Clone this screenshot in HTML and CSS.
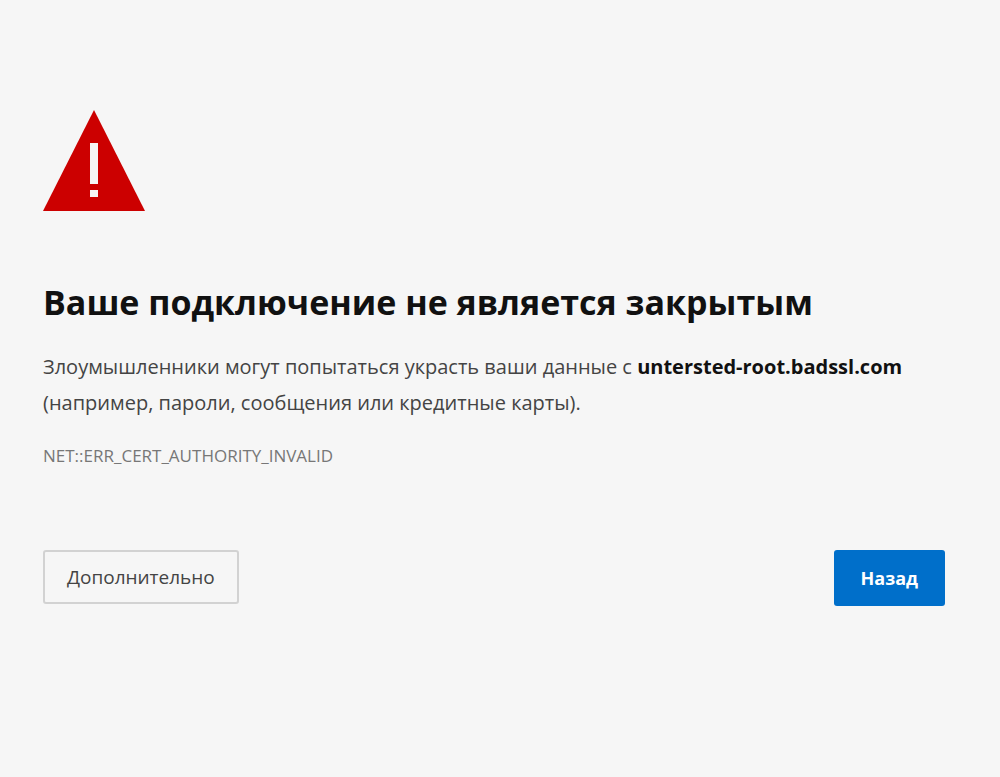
FILE: index.html
```html
<!DOCTYPE html>
<html lang="ru">

<head>
    <meta charset="UTF-8">
    <meta name="viewport" content="width=device-width, initial-scale=1.0">
    <title>Ошибка конфиденциальности</title>
    <link rel="stylesheet" href="styles.css">
</head>

<body>
    <main class="main">
        <svg class="icon" viewBox="0 0 102 102" aria-hidden="true">
            <path class="icon_triangle" d="M51 0L102 101H0Z" />
            <path class="icon_mark" d="M47 33h8v41h-8zM47 80h8v7h-8z" />
        </svg>
        <h1>Ваше подключение не является закрытым</h1>
        <p class="explanation">
            Злоумышленники могут попытаться украсть ваши данные с <strong>untersted-root.badssl.com</strong>
            (например, пароли, сообщения или кредитные карты).
        </p>
        <div class="error_code">NET::ERR_CERT_AUTHORITY_INVALID</div>
        <div class="buttons">
            <button type="button" class="details">Дополнительно</button>
            <button type="button" class="back">Назад</button>
        </div>
    </main>
</body>

</html>
```
FILE: styles.css
```css
body {
    margin: 0;
    background: #f6f6f6;
    color: #444;
    font-family: "Open Sans", "Noto Sans", sans-serif;
}

.main {
    padding: 110px 55px 40px 43px;
}

.icon {
    display: block;
    width: 102px;
    height: 102px;
}

.icon_triangle {
    fill: #cc0000;
}

.icon_mark {
    fill: #f6f6f6;
}

h1 {
    margin: 66px 0 0;
    color: #111;
    font-size: 34px;
    line-height: 48px;
}

.explanation {
    margin: 23px 0 0;
    font-size: 20px;
    line-height: 36px;
}

.explanation strong {
    color: #111;
}

.error_code {
    margin-top: 21px;
    color: #777;
    font-size: 17px;
    line-height: 28px;
}

.buttons {
    display: flex;
    align-items: flex-start;
    justify-content: space-between;
    margin-top: 80px;
}

.buttons button {
    font-family: inherit;
    border-radius: 3px;
}

.details {
    height: 54px;
    padding: 0 22px;
    background: #f6f6f6;
    color: #444;
    font-size: 19px;
    border: 2px solid #d2d2d2;
}

.back {
    height: 56px;
    padding: 0 27px;
    background: #006fca;
    color: #fff;
    font-size: 18px;
    font-weight: bold;
    border: 0;
}
```
